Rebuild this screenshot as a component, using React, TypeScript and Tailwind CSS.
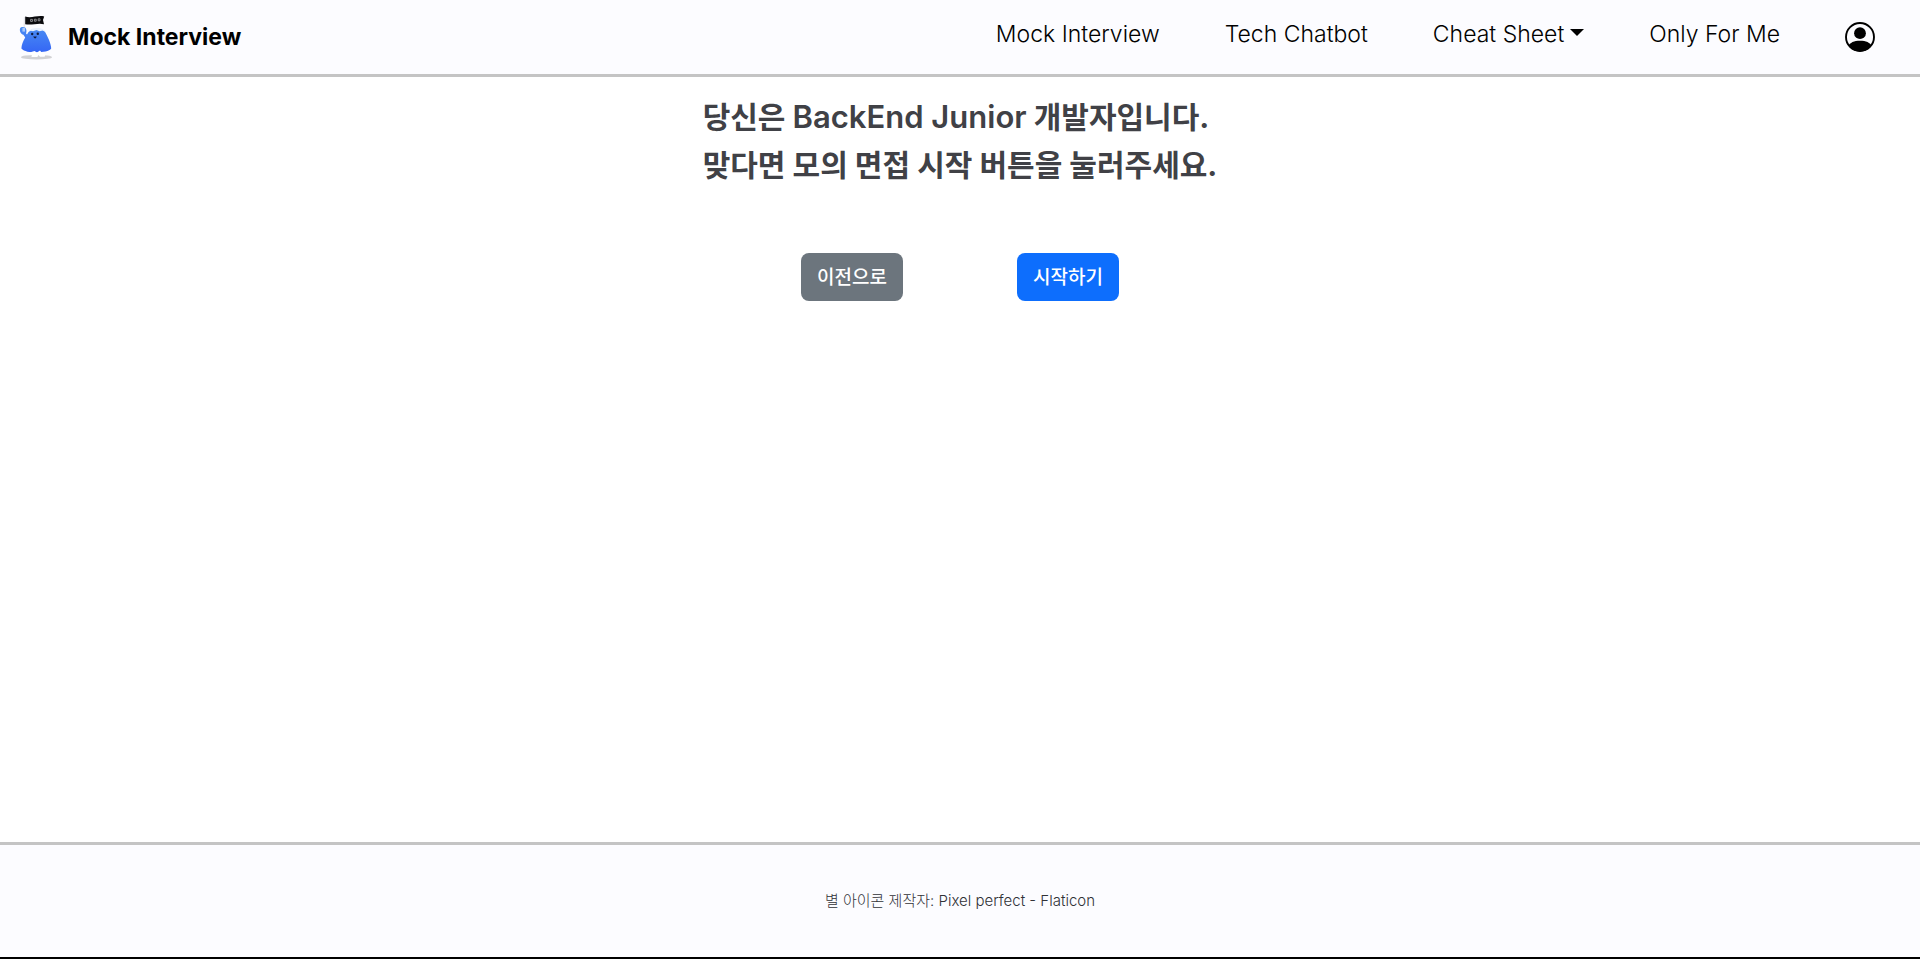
import React from "react";

function Mascot() {
  return (
    <svg viewBox="0 0 36 48" className="h-12 w-9" aria-hidden="true">
      <defs>
        <linearGradient id="mascot-body" x1="0" y1="0" x2="0" y2="1">
          <stop offset="0" stopColor="#4a8df3" />
          <stop offset="1" stopColor="#3566f5" />
        </linearGradient>
      </defs>
      <ellipse cx="18.5" cy="44.2" rx="15.5" ry="2.3" fill="#d2d2d5" />
      <path d="M6.5 4 L6 20" stroke="#e4e4ea" strokeWidth="1.2" />
      <path d="M7.2 3.4 C13 5.6 19 2 26.2 3.4 L25 7 L26 11.2 C20 9.4 14 12.6 7.2 11.2 Z" fill="#0b0b0e" />
      <path d="M12.6 6.4h1.8v2h-1.8zM16.4 6.2h1.8v2h-1.8zM20.2 5.8h1.8v2h-1.8z" fill="none" stroke="#b9b9bd" strokeWidth="0.7" />
      <path
        d="M2 15.4 C1.4 18.4 3 21 5.4 21.8 L7.2 24.4 C5 28 3.6 32 3.4 35.4 C6 38.4 12 39.4 18 39.4 C25 39.4 31.5 38.4 33.2 35.6 C33 30.5 29.8 24 26.8 18.6 C24 16 20 15.8 16 16 C12.6 16.2 10.8 18.4 9 21.4 L8 20.4 C8.8 18.8 8.6 16.2 7.4 14.8 C5.6 13.6 3 13.6 2 15.4 Z"
        fill="url(#mascot-body)"
      />
      <path d="M4.4 15 h2.6 v3.6 h-2.6 Z" fill="#a8c8fa" />
      <path d="M10 40 L16.5 38 L19 39.6 L22 37.6 L24.4 40.4 L27.4 41.4 L26.6 43.8 H22 L20.4 42 L19.4 44 H13.4 L14 41.8 Z" fill="#fff" />
      <path d="M11 18.6 C12.5 15.4 16 14.8 20 15 C23.5 15.2 26 16 28 19.2 L24.8 17.6 L21.5 18.2 L18.5 17 L15 18.2 L12.8 17.8 Z" fill="#e8f0fd" />
      <circle cx="14.2" cy="21" r="1.2" fill="#101c40" />
      <circle cx="19.8" cy="20.8" r="1.2" fill="#101c40" />
      <path d="M15.2 23.4 Q17.2 27.4 18.8 23.4 Z" fill="#101c40" />
    </svg>
  );
}

function ProfileIcon() {
  return (
    <svg viewBox="0 0 30 30" className="size-[30px]" aria-hidden="true">
      <defs>
        <clipPath id="profile-ring">
          <circle cx="15" cy="15" r="14.4" />
        </clipPath>
      </defs>
      <circle cx="15" cy="15" r="14" fill="none" stroke="#000" strokeWidth="1.9" />
      <circle cx="15" cy="11.2" r="5.9" fill="#000" />
      <path d="M3 24.5 C5 20.5 9 18.8 15 18.8 C21 18.8 25 20.5 27 24.5 V30 H3 Z" fill="#000" clipPath="url(#profile-ring)" />
    </svg>
  );
}

export default function App() {
  return (
    <div className="flex min-h-screen flex-col border-b-2 border-black bg-white font-['Inter','Noto_Sans_CJK_KR',sans-serif] text-black">
      <header className="flex h-[77px] items-center justify-between border-b-[3px] border-[#c4c4c4] bg-[#fcfcff] pr-[45px] pl-[18px]">
        <a href="#" className="flex items-center gap-3.5 text-[23px] font-bold">
          <Mascot />
          Mock Interview
        </a>
        <nav className="flex items-center gap-[65px] text-[23px] font-light">
          <a href="#" className="pb-1.5">Mock Interview</a>
          <a href="#" className="pb-1.5">Tech Chatbot</a>
          <button type="button" className="flex items-center gap-1.5 pb-1.5">
            Cheat Sheet
            <svg viewBox="0 0 14 7" className="mb-1 h-[7px] w-3.5" aria-hidden="true">
              <path d="M0 0H14L7 7Z" />
            </svg>
          </button>
          <a href="#" className="pb-1.5">Only For Me</a>
          <button type="button" aria-label="Profile">
            <ProfileIcon />
          </button>
        </nav>
      </header>

      <main className="flex flex-1 flex-col items-center pt-4">
        <h1 className="text-[30px] leading-12 font-bold text-[#404146]">
          당신은 <span className="text-[31px] leading-none font-semibold">BackEnd Junior</span> 개발자입니다.
          <br />
          맞다면 모의 면접 시작 버튼을 눌러주세요.
        </h1>
        <div className="mt-16 flex gap-[114px] text-[19px] font-medium text-white">
          <button type="button" className="h-12 rounded-lg bg-[#6c757d] px-4 pt-0.5">이전으로</button>
          <button type="button" className="h-12 rounded-lg bg-[#0d6efd] px-4 pt-0.5">시작하기</button>
        </div>
      </main>

      <footer className="flex h-[115px] items-center justify-center border-t-[3px] border-[#c4c4c4] bg-[#fcfcff] text-[15px] font-light text-[#303136]">
        <p>별 아이콘 제작자: Pixel perfect - Flaticon</p>
      </footer>
    </div>
  );
}
